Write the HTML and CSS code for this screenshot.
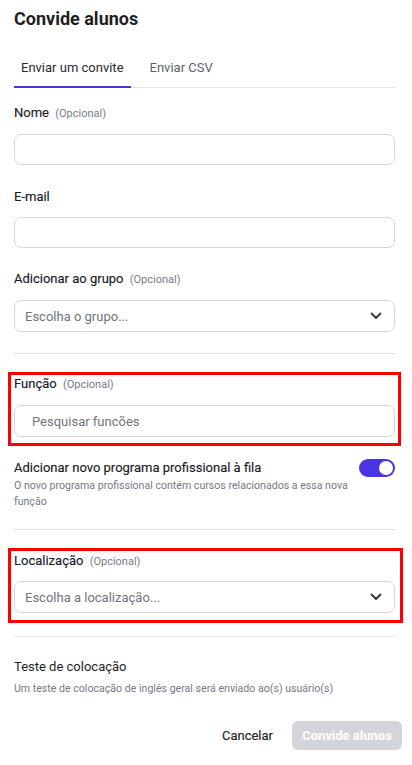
FILE: index.html
```html
<!DOCTYPE html>
<html>
<head>
    <title>Convide alunos</title>
    <link rel="stylesheet" href="styles.css">
</head>
<body>
    <div class="modal">
        <h1>Convide alunos</h1>

        <div class="tabs">
            <div class="tab active">Enviar um convite</div>
            <div class="tab">Enviar CSV</div>
        </div>

        <div class="field first">
            <label>Nome <span class="opt">(Opcional)</span></label>
            <div class="input"></div>
        </div>

        <div class="field">
            <label>E-mail</label>
            <div class="input"></div>
        </div>

        <div class="field group">
            <label>Adicionar ao grupo <span class="opt">(Opcional)</span></label>
            <div class="input select">
                <span class="placeholder">Escolha o grupo...</span>
                <svg width="12" height="8" viewBox="0 0 12 8"><path d="M1.5 1.5 L6 6 L10.5 1.5" fill="none" stroke="#333" stroke-width="1.8" stroke-linecap="round" stroke-linejoin="round"/></svg>
            </div>
        </div>

        <hr class="divider">

        <div class="field highlight">
            <label>Função <span class="opt">(Opcional)</span></label>
            <div class="input search">
                <span class="placeholder">Pesquisar funcões</span>
            </div>
        </div>

        <div class="toggle-row">
            <div class="toggle-text">
                <div class="toggle-title">Adicionar novo programa profissional à fila</div>
                <div class="hint">O novo programa profissional contém cursos relacionados a essa nova função</div>
            </div>
            <div class="switch"><div class="knob"></div></div>
        </div>

        <hr class="divider mid">

        <div class="field highlight wide">
            <label>Localização <span class="opt">(Opcional)</span></label>
            <div class="input select">
                <span class="placeholder">Escolha a localização...</span>
                <svg width="12" height="8" viewBox="0 0 12 8"><path d="M1.5 1.5 L6 6 L10.5 1.5" fill="none" stroke="#333" stroke-width="1.8" stroke-linecap="round" stroke-linejoin="round"/></svg>
            </div>
        </div>

        <hr class="divider short">

        <div class="placement">
            <div class="placement-title">Teste de colocação</div>
            <div class="hint">Um teste de colocação de inglês geral será enviado ao(s) usuário(s)</div>
        </div>

        <div class="actions">
            <button type="button" class="btn-cancel">Cancelar</button>
            <button type="button" class="btn-submit" disabled>Convide alunos</button>
        </div>
    </div>
</body>
</html>
```

FILE: styles.css
```css
body {
    margin: 0;
    padding: 0;
    background-color: #fff;
    font-family: Roboto, "Noto Sans", Arial, sans-serif;
    color: #1f1f24;
}

.modal {
    padding: 7px 17px 0 14px;
}

h1 {
    font-size: 18px;
    font-weight: 700;
    margin: 0;
    line-height: 24px;
}

.tabs {
    display: flex;
    margin-top: 23px;
    border-bottom: 1px solid #e3e3ea;
}

.tab {
    font-size: 13px;
    color: #5e5f6b;
    padding: 6px 7px 12px 7px;
    margin-right: 12px;
}

.tab.active {
    color: #2a2a30;
    box-shadow: inset 0 -2px 0 #4a33e0;
    margin-bottom: -1px;
    padding-bottom: 13px;
}

.field {
    margin-top: 23px;
}

.field.first {
    margin-top: 16px;
}

.field.group {
    margin-top: 22px;
}

.field label,
.toggle-title {
    display: block;
    font-size: 13px;
    font-weight: 400;
    line-height: 17px;
    color: #1a1a1f;
    -webkit-text-stroke: 0.15px #1a1a1f;
}

.field label {
    margin-bottom: 12px;
}

.opt {
    font-size: 11px;
    font-weight: 400;
    color: #7a7b86;
    margin-left: 3px;
    -webkit-text-stroke: 0;
}

.input {
    height: 31px;
    box-sizing: border-box;
    border: 1px solid #d6d7de;
    border-radius: 7px;
    display: flex;
    align-items: center;
    padding: 0 12px 0 10px;
}

.input.select {
    height: 32px;
    justify-content: space-between;
}

.input.search {
    height: 32px;
    padding-left: 17px;
}

.placeholder {
    font-size: 13px;
    color: #72737e;
}

.divider {
    border: none;
    border-top: 1px solid #e3e3ea;
    margin: 21px 0 0 0;
}

.divider.mid {
    margin-top: 19px;
}

.divider.short {
    margin-top: 13px;
}

.highlight {
    border: 3px solid #ff0000;
    margin: 18px -6px 0 -6px;
    padding: 0 3px 6px 3px;
}

.highlight.wide {
    margin-top: 18px;
    margin-right: -8px;
    padding: 1px 5px 7px 3px;
}

.highlight.wide label {
    margin-bottom: 11px;
}

.toggle-row {
    display: flex;
    justify-content: space-between;
    align-items: flex-start;
    margin-top: 13px;
}

.hint {
    font-size: 10.6px;
    color: #777884;
    line-height: 16px;
    margin-top: 2px;
}

.toggle-text {
    max-width: 340px;
}

.switch {
    width: 36px;
    height: 18px;
    border-radius: 9px;
    background-color: #4a33e0;
    display: flex;
    justify-content: flex-end;
    align-items: center;
    padding: 0 2px;
    box-sizing: border-box;
    flex-shrink: 0;
}

.knob {
    width: 14px;
    height: 14px;
    border-radius: 50%;
    background-color: #fff;
}

.placement {
    margin-top: 21px;
}

.placement-title {
    font-size: 13px;
    line-height: 17px;
}

.placement .hint {
    margin-top: 6px;
}

.actions {
    display: flex;
    justify-content: flex-end;
    align-items: center;
    margin-top: 23px;
    margin-right: -7px;
}

button {
    font-family: inherit;
    font-size: 13px;
    border: none;
    background: none;
}

.btn-cancel {
    color: #222;
    font-weight: 400;
    -webkit-text-stroke: 0.15px #222;
    padding: 8px 12px;
    margin-right: 7px;
}

.btn-submit {
    background-color: #d3d5dd;
    color: #fff;
    font-weight: 700;
    border-radius: 6px;
    height: 29px;
    width: 110px;
    padding: 0;
    white-space: nowrap;
}
```
